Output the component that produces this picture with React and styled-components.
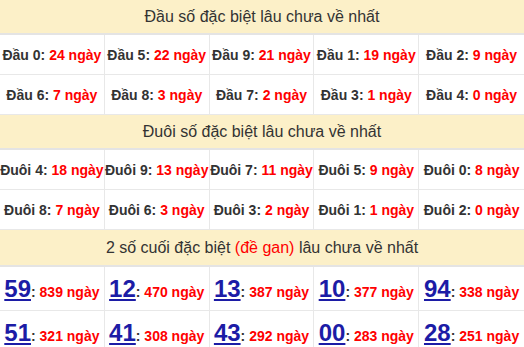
import React from 'react'
import styled, { createGlobalStyle } from 'styled-components'

const dau = [
  ['Đầu 0', 24], ['Đầu 5', 22], ['Đầu 9', 21], ['Đầu 1', 19], ['Đầu 2', 9],
  ['Đầu 6', 7], ['Đầu 8', 3], ['Đầu 7', 2], ['Đầu 3', 1], ['Đầu 4', 0],
]

const duoi = [
  ['Đuôi 4', 18], ['Đuôi 9', 13], ['Đuôi 7', 11], ['Đuôi 5', 9], ['Đuôi 0', 8],
  ['Đuôi 8', 7], ['Đuôi 6', 3], ['Đuôi 3', 2], ['Đuôi 1', 1], ['Đuôi 2', 0],
]

const gan = [
  ['59', 839], ['12', 470], ['13', 387], ['10', 377], ['94', 338],
  ['51', 321], ['41', 308], ['43', 292], ['00', 283], ['28', 251],
]

function App() {
  return (
    <Page>
      <Global />
      <Section>
        <Head><span>Đầu số đặc biệt lâu chưa về nhất</span></Head>
        <Grid>
          {dau.map(([k, v], i) => (
            <Cell key={k} $last={i % 5 === 4} $h={39}>
              <span>{k}: <Days>{v} ngày</Days></span>
            </Cell>
          ))}
        </Grid>
      </Section>
      <Section>
        <Head><span>Đuôi số đặc biệt lâu chưa về nhất</span></Head>
        <Grid>
          {duoi.map(([k, v], i) => (
            <Cell key={k} $last={i % 5 === 4} $h={39}>
              <span>{k}: <Days>{v} ngày</Days></span>
            </Cell>
          ))}
        </Grid>
      </Section>
      <Section>
        <Head $tall>
          <span>2 số cuối đặc biệt <Red>(đề gan)</Red> lâu chưa về nhất</span>
        </Head>
        <Grid>
          {gan.map(([k, v], i) => (
            <Cell key={k} $last={i % 5 === 4} $h={43}>
              <span><Num href="#">{k}</Num>: <Days>{v} ngày</Days></span>
            </Cell>
          ))}
        </Grid>
      </Section>
    </Page>
  )
}

export default App

const Global = createGlobalStyle`
body{
  margin:0;
  background:#fff;
  font-family:"Liberation Sans", Arial, sans-serif;
}
`

const Page = styled.div`
width:524px;
`

const Section = styled.div`
display:flex;
flex-direction:column;
`

const Head = styled.div`
height:${props => props.$tall ? '35px' : '33px'};
display:flex;
align-items:center;
justify-content:center;
background:#fcf0c8;
border-bottom:2px solid #e4e4e4;
color:#333;
font-size:16px;
`

const Red = styled.span`
color:#f00;
`

const Grid = styled.div`
display:grid;
grid-template-columns:repeat(5,1fr);
`

const Cell = styled.div`
height:${props => props.$h}px;
display:flex;
align-items:center;
justify-content:center;
white-space:nowrap;
border-right:${props => props.$last ? 'none' : '1px solid #e8e8e8'};
border-bottom:1px solid #e8e8e8;
color:#333;
font-size:14px;
font-weight:bold;
`

const Days = styled.span`
color:#f00;
`

const Num = styled.a`
color:#1c1ca6;
font-size:24px;
font-weight:bold;
text-decoration:underline;
`
